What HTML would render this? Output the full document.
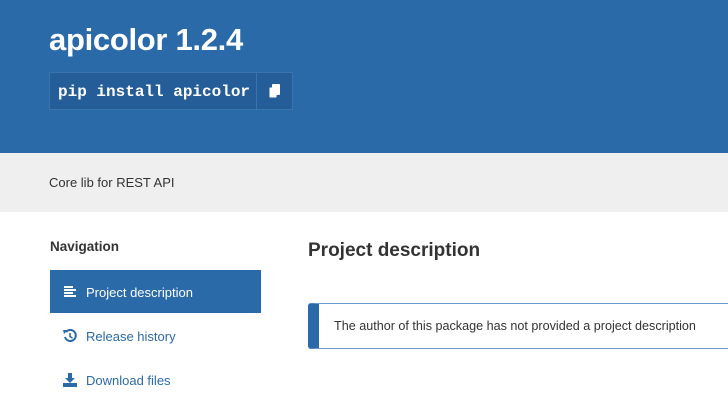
<!DOCTYPE html>
<html><head><style>
body{margin:0;width:728px;height:408px;overflow:hidden;background:#fff;font-family:"Liberation Sans",sans-serif;position:relative}
.hdr{position:absolute;left:0;top:0;width:728px;height:153px;background:#2b6aa8}
h1{position:absolute;left:49px;top:22px;margin:0;color:#fff;font-size:31px;font-weight:bold;letter-spacing:-0.3px}
.pip{position:absolute;left:49px;top:72px;width:244px;height:38px;background:#245d98;border:1px solid #3a74ae;box-sizing:border-box}
.pip span{position:absolute;left:8px;top:10px;font-family:"Liberation Mono",monospace;font-weight:bold;color:#fff;font-size:16px}
.pip i{position:absolute;left:206px;top:0;width:1px;height:36px;background:#3a74ae}
.band{position:absolute;left:0;top:153px;width:728px;height:59px;background:#efefef}
.band span{position:absolute;left:49px;top:22px;font-size:13px;color:#333}
.nav{position:absolute;left:50px;top:239px;font-size:13.5px;font-weight:bold;color:#333}
.act{position:absolute;left:50px;top:270px;width:211px;height:43px;background:#2b6aa8}
.item{position:absolute;left:86px;font-size:13px;color:#2b6aa8}
h2{position:absolute;left:308px;top:240px;margin:0;font-size:19px;font-weight:bold;color:#333}
.call{position:absolute;left:308px;top:303px;width:430px;height:46px;box-sizing:border-box;border:1px solid #6b9ad0;border-left:11px solid #2b6aa8;border-radius:3px}
.call span{position:absolute;left:15px;top:15px;font-size:12.6px;color:#333}
</style></head><body>
<div class="hdr"></div>
<h1>apicolor 1.2.4</h1>
<div class="pip"><span>pip install apicolor</span><i></i>
<svg style="position:absolute;left:218px;top:11px" width="14" height="15" viewBox="0 0 14 15"><rect x="1" y="3" width="8" height="11" rx="1" fill="#fff" stroke="#245d98"/><rect x="4" y="0" width="8" height="11" rx="1" fill="#fff"/></svg></div>
<div class="band"><span>Core lib for REST API</span></div>
<div class="nav">Navigation</div>
<div class="act"></div>
<svg style="position:absolute;left:64px;top:286px" width="12" height="11"><g fill="#fff"><rect x="0" y="0" width="9" height="2"/><rect x="0" y="3" width="12" height="2"/><rect x="0" y="6" width="9" height="2"/><rect x="0" y="9" width="12" height="2"/></g></svg>
<div class="item" style="top:285px;color:#fff">Project description</div>
<svg style="position:absolute;left:63px;top:329px" width="14" height="14" viewBox="0 0 14 14"><path d="M3 3 A5.5 5.5 0 1 1 2 8" fill="none" stroke="#2b6aa8" stroke-width="2"/><path d="M0 1 L5 1 L1 5Z" fill="#2b6aa8"/><path d="M7 4 V7.5 L9.5 9" fill="none" stroke="#2b6aa8" stroke-width="1.6"/></svg>
<div class="item" style="top:329px">Release history</div>
<svg style="position:absolute;left:63px;top:373px" width="14" height="14" viewBox="0 0 14 14"><path d="M5 0H9V5H12L7 10L2 5H5Z" fill="#2b6aa8"/><rect x="0" y="10" width="14" height="4" fill="#2b6aa8"/></svg>
<div class="item" style="top:373px">Download files</div>
<h2>Project description</h2>
<div class="call"><span>The author of this package has not provided a project description</span></div>
</body></html>
